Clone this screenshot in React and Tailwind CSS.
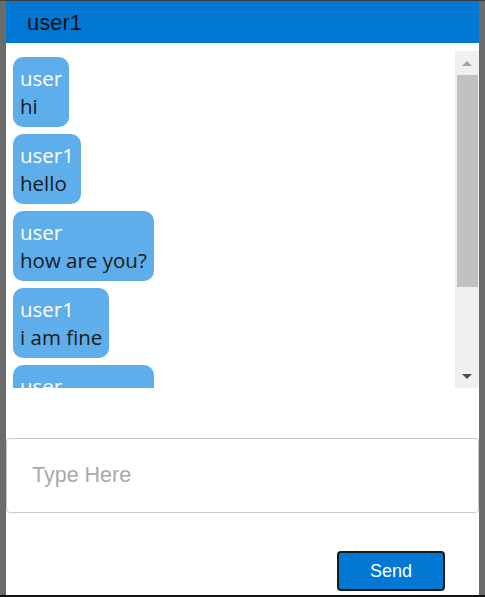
import React from 'react';

const messages = [
  { from: 'user', text: 'hi' },
  { from: 'user1', text: 'hello' },
  { from: 'user', text: 'how are you?' },
  { from: 'user1', text: 'i am fine' },
  { from: 'user', text: 'how are you?' },
  { from: 'user1', text: 'good' },
];

function Bubble({ from, text }) {
  return (
    <div className="shrink-0 rounded-[10px] bg-[#5daeeb] px-[7px] py-[7px] text-[20.5px] leading-[28px] font-['Open_Sans',sans-serif]">
      <div className="text-white">{from}</div>
      <div className="text-[#1a1a1a]">{text}</div>
    </div>
  );
}

function ScrollBar() {
  return (
    <div className="w-[24px] bg-[#f0f0f0] flex flex-col items-center">
      <div className="h-[24px] w-full flex items-center justify-center">
        <div className="w-0 h-0 border-l-[5px] border-r-[5px] border-b-[5px] border-l-transparent border-r-transparent border-b-[#a3a3a3]" />
      </div>
      <div className="h-[212px] w-[21px] bg-[#c1c1c1]" />
      <div className="flex-1" />
      <div className="h-[24px] w-full flex items-center justify-center">
        <div className="w-0 h-0 border-l-[5px] border-r-[5px] border-t-[5px] border-l-transparent border-r-transparent border-t-[#505050]" />
      </div>
    </div>
  );
}

export default function App() {
  return (
    <div className="h-[597px] w-full bg-[#6b6b6b] flex flex-col">
      <div className="h-px bg-[#3c3c3c]" />
      <div className="flex-1 mx-[6px] bg-white flex flex-col">
        <div className="h-[42px] bg-[#0078d4] pl-[21px] flex items-center text-[22px] text-[#111] font-['Liberation_Sans',Arial,sans-serif]">
          user1
        </div>

        <div className="mt-[8px] h-[337px] flex">
          <div className="flex-1 overflow-hidden pl-[7px] pt-[6px] flex flex-col items-start gap-[7px]">
            {messages.map((m, i) => (
              <Bubble key={i} from={m.from} text={m.text} />
            ))}
          </div>
          <ScrollBar />
        </div>

        <div className="mt-[50px] h-[75px] border border-[#c8c8c8] rounded-[4px] pl-[25px] flex items-center">
          <input
            placeholder="Type Here"
            className="w-full outline-none text-[21.5px] font-['Liberation_Sans',Arial,sans-serif] placeholder:text-[#a9a9a9]"
          />
        </div>

        <div className="mt-[38px] flex justify-end pr-[34px]">
          <button className="w-[108px] h-[40px] bg-[#0078d4] border-2 border-[#1a1a1a] rounded-[4px] text-white text-[18px] font-['Liberation_Sans',Arial,sans-serif]">
            Send
          </button>
        </div>
      </div>
      <div className="h-[2px] bg-[#111]" />
    </div>
  );
}
